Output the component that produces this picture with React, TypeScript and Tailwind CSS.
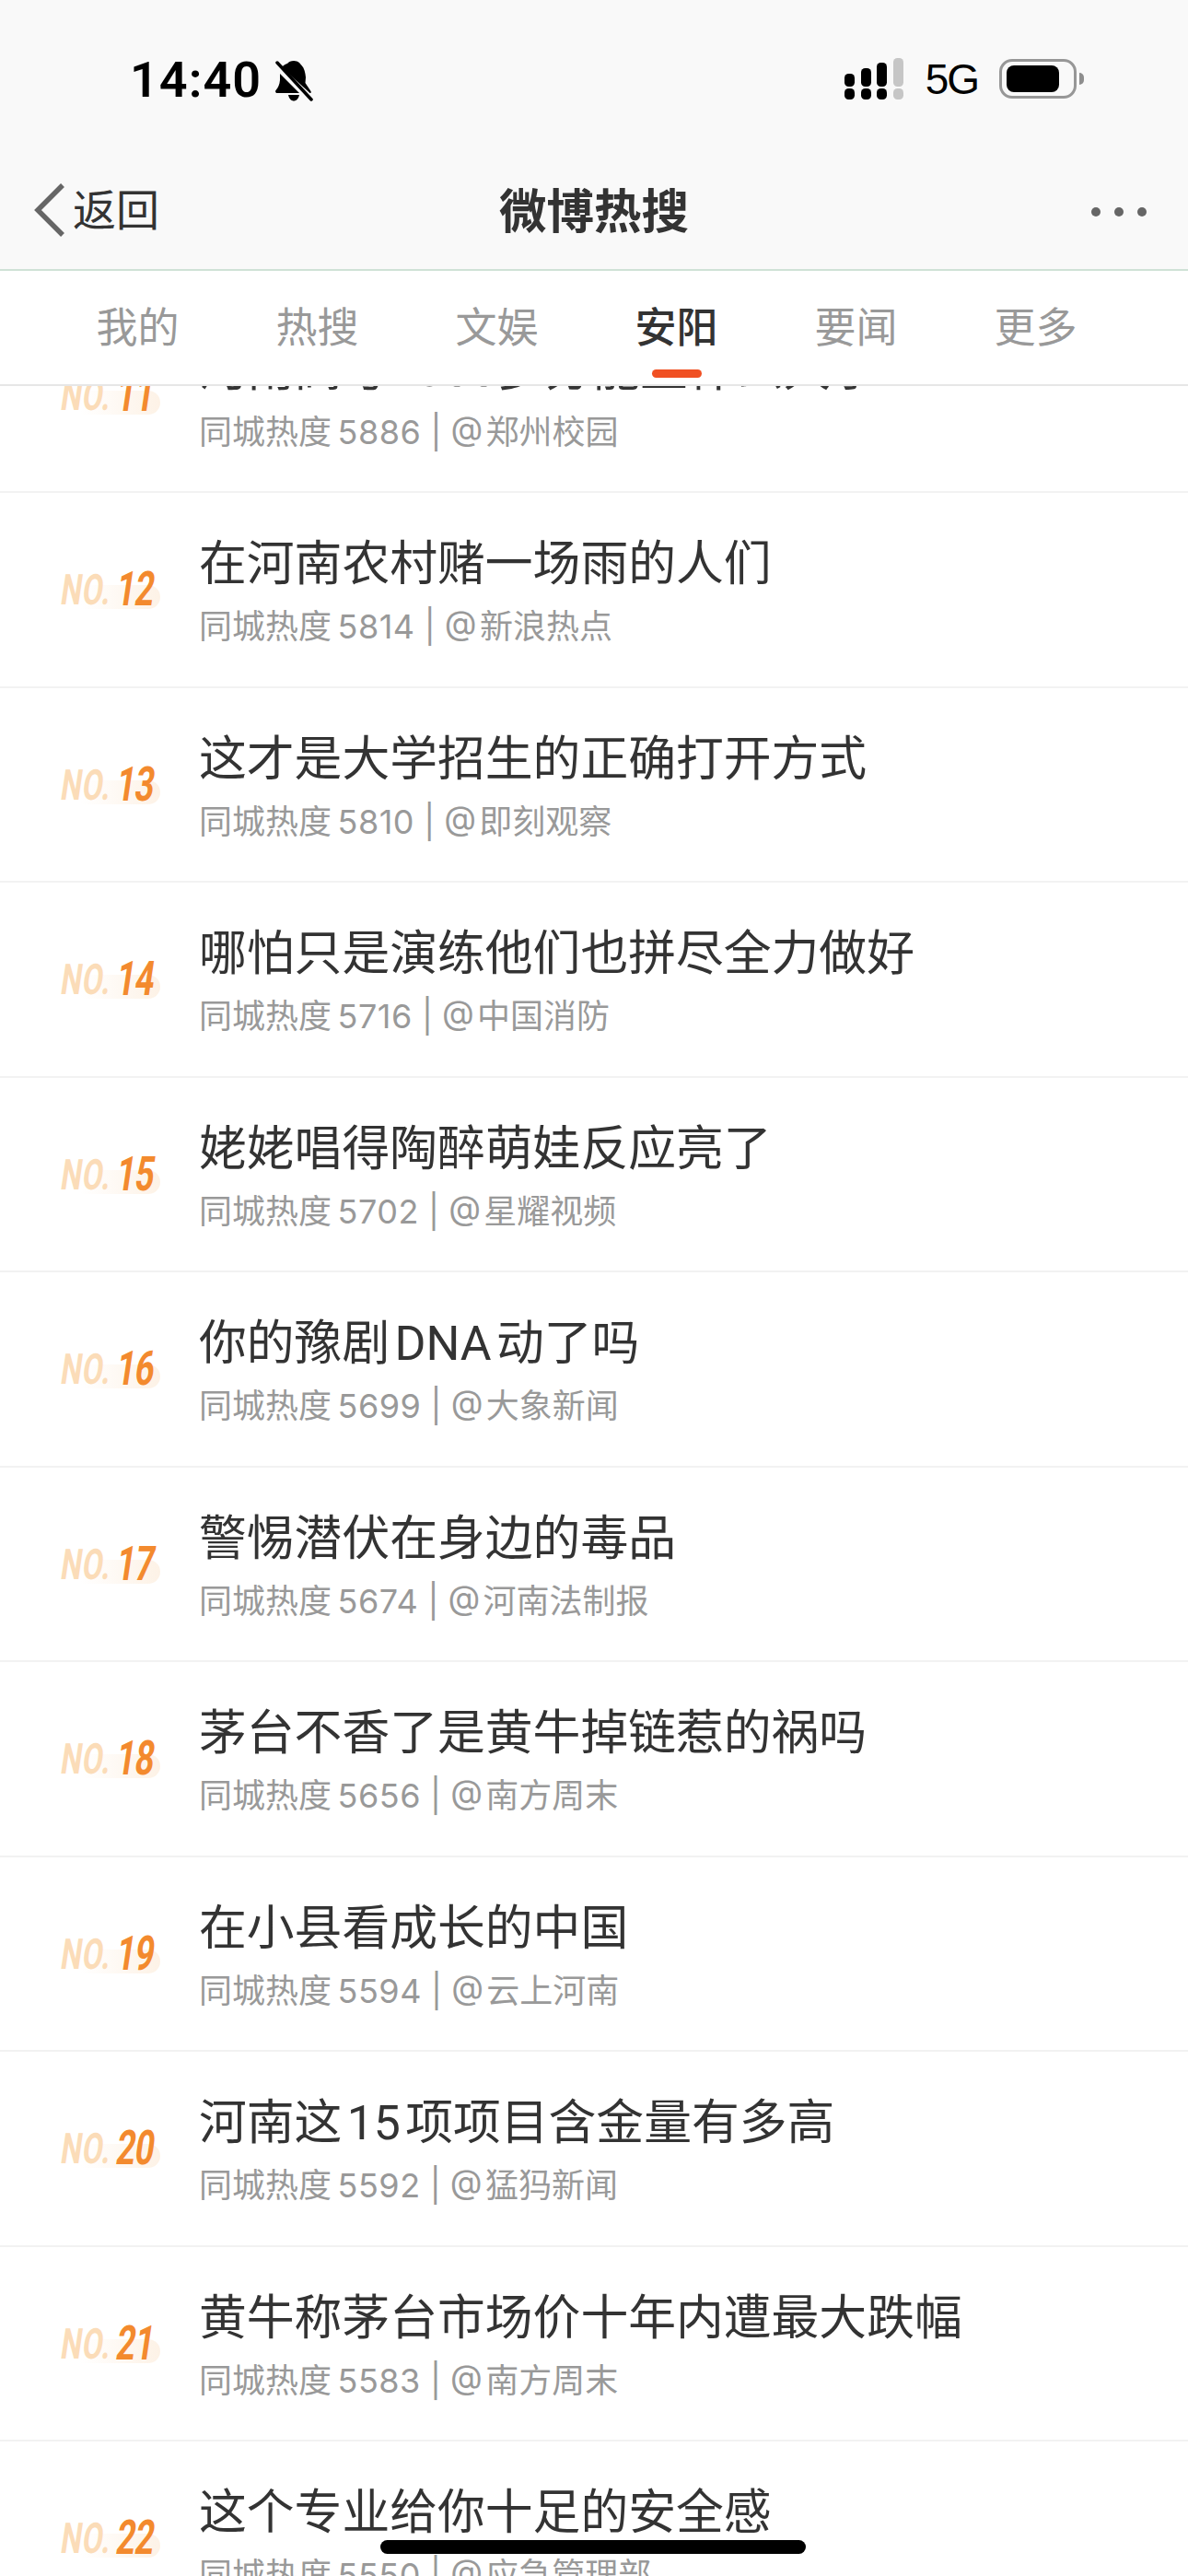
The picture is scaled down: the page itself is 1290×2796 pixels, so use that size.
const rows = [
  { no: 11, title: "河南高考1300多分能上什么大学", heat: 5886, from: "郑州校园" },
  { no: 12, title: "在河南农村赌一场雨的人们", heat: 5814, from: "新浪热点" },
  { no: 13, title: "这才是大学招生的正确打开方式", heat: 5810, from: "即刻观察" },
  { no: 14, title: "哪怕只是演练他们也拼尽全力做好", heat: 5716, from: "中国消防" },
  { no: 15, title: "姥姥唱得陶醉萌娃反应亮了", heat: 5702, from: "星耀视频" },
  { no: 16, title: "你的豫剧\u200aDNA\u200a动了吗", heat: 5699, from: "大象新闻" },
  { no: 17, title: "警惕潜伏在身边的毒品", heat: 5674, from: "河南法制报" },
  { no: 18, title: "茅台不香了是黄牛掉链惹的祸吗", heat: 5656, from: "南方周末" },
  { no: 19, title: "在小县看成长的中国", heat: 5594, from: "云上河南" },
  { no: 20, title: "河南这\u200a15\u200a项项目含金量有多高", heat: 5592, from: "猛犸新闻" },
  { no: 21, title: "黄牛称茅台市场价十年内遭最大跌幅", heat: 5583, from: "南方周末" },
  { no: 22, title: "这个专业给你十足的安全感", heat: 5550, from: "应急管理部" },
];

const tabs = ["我的", "热搜", "文娱", "安阳", "要闻", "更多"];

const font = "font-['Inter','Noto_Sans_CJK_SC',sans-serif]";

function SignalIcon() {
  return (
    <svg width="64" height="45" viewBox="0 0 64 45">
      <rect x="0" y="17" width="11" height="14" rx="4.5" />
      <rect x="18" y="11" width="11" height="20" rx="4.5" />
      <rect x="35" y="5" width="11" height="26" rx="4.5" />
      <rect x="53" y="0" width="11" height="31" rx="4.5" fill="#c6c6c6" />
      <rect x="0" y="33" width="11" height="12" rx="4.5" />
      <rect x="18" y="33" width="11" height="12" rx="4.5" />
      <rect x="35" y="33" width="11" height="12" rx="4.5" />
      <rect x="53" y="33" width="11" height="12" rx="4.5" fill="#c6c6c6" />
    </svg>
  );
}

function BellOffIcon() {
  return (
    <svg width="41" height="45" viewBox="0 0 41 45" className="ml-[15px]">
      <path d="M20 1c5 0 7 3 8.500 5 3 3 4 8 4.500 13l-.5 6 6 9c.8 1.400 0 2-1 2L7 8c1.500-2 3-3 6-4 1.500-2 4-3 7-3Z" />
      <path d="M5 15 26 36H2c-1.500 0-2.500-1.500-1.500-3C3 30 4.500 27 5 22Z" />
      <path d="M14 38h12c-1 4.500-3.500 6.500-6 6.500S15 42.500 14 38Z" />
      <path d="M2 3 39 43" stroke="#000" strokeWidth="3.500" strokeLinecap="round" fill="none" />
    </svg>
  );
}

function BatteryIcon() {
  return (
    <div className="ml-[23px] flex items-center">
      <div className="flex h-[43px] w-[84px] items-center rounded-[14px] border-[3px] border-[#979797] pl-[5px]">
        <div className="h-[29px] w-[57px] rounded-[8px] bg-black" />
      </div>
      <div className="ml-[3px] h-[13px] w-[5px] rounded-r-full bg-[#8e8e8e]" />
    </div>
  );
}

function StatusBar() {
  return (
    <div className="flex h-[172px] items-start pt-[63px]">
      <div className="ml-[141px] flex items-center">
        <span className="text-[54px] leading-[48px] font-semibold tracking-[1px] text-black font-['Roboto',sans-serif]">14:40</span>
        <BellOffIcon />
      </div>
      <div className="ml-auto flex items-center pr-[113px]">
        <SignalIcon />
        <span className="ml-[24px] text-[46px] leading-[44px] tracking-[-2px] text-black font-['Liberation_Sans',sans-serif]">5G</span>
        <BatteryIcon />
      </div>
    </div>
  );
}

function NavBar() {
  return (
    <div className="relative flex h-[122px] items-start justify-between border-b-2 border-[#cfe2d6] bg-[#f9f9f9] pl-[36px] pr-[45px] pt-[26px]">
      <div className="flex items-center">
        <svg width="36" height="60" viewBox="0 0 36 60" fill="none">
          <path d="M32 3 5 30 32 57" stroke="#666" strokeWidth="5.500" />
        </svg>
        <span className={`ml-[7px] text-[47px] leading-[60px] text-[#333] ${font}`}>返回</span>
      </div>
      <div className={`absolute left-0 right-0 top-[27px] text-center text-[51.500px] leading-[60px] font-bold text-[#333] ${font}`}>微博热搜</div>
      <div className="mt-[27px] flex gap-[15px]">
        <span className="size-[10px] rounded-full bg-[#666]" />
        <span className="size-[10px] rounded-full bg-[#666]" />
        <span className="size-[10px] rounded-full bg-[#666]" />
      </div>
    </div>
  );
}

function Tabs() {
  return (
    <div className="relative z-10 grid h-[125px] grid-cols-[repeat(6,195px)] border-b-2 border-[#e6e6e6] bg-white pl-[52px]">
      {tabs.map((t) => (
        <div key={t} className="relative flex justify-center pt-[32px]">
          <span className={`text-[45px] leading-[60px] ${font} ${t === "安阳" ? "font-medium text-[#333]" : "text-[#999]"}`}>{t}</span>
          {t === "安阳" && <div className="absolute left-[71px] top-[107px] h-[9px] w-[54px] rounded-full bg-[#f05023]" />}
        </div>
      ))}
    </div>
  );
}

function Rank({ no }: { no: number }) {
  return (
    <div className="relative h-[44px] w-[108px]">
      <div className="absolute left-[21px] top-[17px] h-[26px] w-[86px] rounded-r-full bg-gradient-to-r from-white to-[#fdf2e6]" />
      <div className="absolute left-0 top-0 flex h-[44px] w-[160px] origin-left scale-x-[0.7] -skew-x-[12deg] items-end whitespace-nowrap font-['Roboto',sans-serif] font-bold leading-[44px]">
        <span className="text-[46px] tracking-[1px] text-[#fbdcb8]">NO.</span>
        <span className="ml-[8px] text-[52px] tracking-[-1px] text-[#f38a2e]">{no}</span>
      </div>
    </div>
  );
}

function Row({ no, title, heat, from }: (typeof rows)[number]) {
  return (
    <div className="flex h-[211.5px] shrink-0 border-b-2 border-[#f2f2f2] bg-white">
      <div className="w-[216px] pl-[67px] pt-[83px]">
        <Rank no={no} />
      </div>
      <div className="pt-[42px]">
        <div className="text-[51.800px] leading-[72px] whitespace-nowrap text-[#333] font-['Roboto','Noto_Sans_CJK_SC',sans-serif]">{title}</div>
        <div className={`mt-[7px] text-[36px] leading-[48px] whitespace-nowrap text-[#999] ${font}`}>
          同城热度{"\u2009"}<span className="tracking-[0.5px]">{heat}</span> | @{"\u200a"}{from}
        </div>
      </div>
    </div>
  );
}

export default function App() {
  return (
    <div className="relative flex h-[2796px] w-[1290px] flex-col overflow-hidden bg-white">
      <div className="bg-[#f9f9f9]">
        <StatusBar />
        <NavBar />
      </div>
      <Tabs />
      <div className="flex min-h-0 flex-1 flex-col overflow-hidden">
        <div className="-mt-[95.500px] flex flex-col">
          {rows.map((r) => (
            <Row key={r.no} {...r} />
          ))}
        </div>
      </div>
      <div className="absolute left-[413px] top-[2757px] h-[15px] w-[462px] rounded-full bg-black" />
    </div>
  );
}
